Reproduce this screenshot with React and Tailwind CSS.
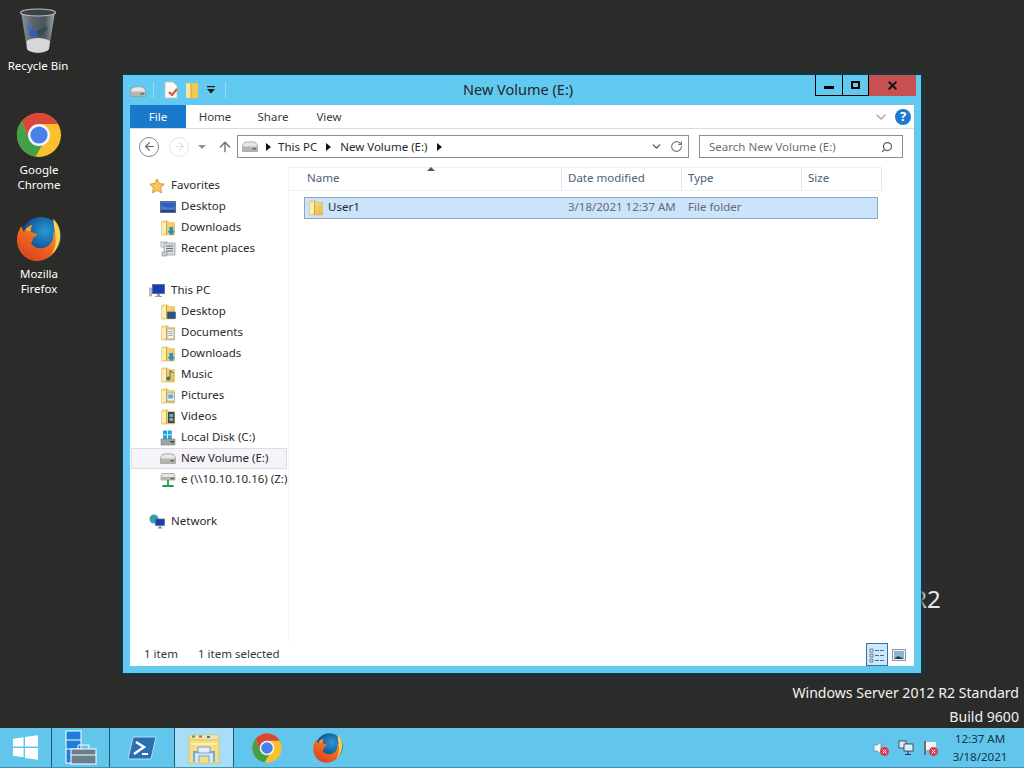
import { ChevronDown, RotateCw, Search, ArrowUp, ArrowLeft, ArrowRight, X } from 'lucide-react';

const font = 'font-["Noto_Sans","Open_Sans",sans-serif]';

function Folder({ className = 'w-4 h-4', id = 'fg', children }) {
  return (
    <svg viewBox="0 0 16 16" className={className}>
      <defs>
        <linearGradient id={id} x1="0" y1="0" x2="1" y2="1">
          <stop offset="0" stopColor="#fbe48c" />
          <stop offset="1" stopColor="#e9b83e" />
        </linearGradient>
      </defs>
      <path d="M2 1h6l1.200 1.500H14.500V15H2z" fill={`url(#${id})`} stroke="#d9b254" strokeWidth=".5" />
      <path d="M1.500 2.500L6.500 1v13l-5 1.200z" fill="#fbeeb4" stroke="#dcbb68" strokeWidth=".5" />
      <path d="M6.500 1v13" stroke="#c9962e" strokeWidth=".8" />
      {children}
    </svg>
  );
}

function Drive({ className = 'w-4 h-4', net, win }) {
  if (win) {
    return (
      <svg viewBox="0 0 16 16" className={className}>
        <path d="M3 .5h4v4H3zM7.800 .5h4v4h-4zM3 5.200h4v3.800H3zM7.800 5.200h4v3.800h-4z" fill="#1aa7dc" />
        <path d="M1 9h14v6H1z" fill="#9ea3a4" stroke="#6f7476" strokeWidth=".5" />
        <rect x="10.500" y="11" width="3.500" height="1.600" fill="#3f4a44" />
      </svg>
    );
  }
  return (
    <svg viewBox="0 0 16 16" className={className}>
      <path d={net ? 'M2 1.500h12l1 3v3.500H1V4.500z' : 'M2.500 3.500C5 2.500 11 2.500 13.500 3.500l2 3v6H.5v-6z'} fill="#e6e7e6" stroke="#80807e" strokeWidth=".6" />
      <rect x="1" y={net ? 5 : 7.500} width="14" height={net ? 3 : 4.500} fill="#b3b4b2" />
      <rect x="10.500" y={net ? 5.800 : 9} width="3.500" height="1.500" fill="#5e6a58" />
      {net && <path d="M8 8v5M2.500 14h11M8 12.500v2.500" stroke="#1fa04c" strokeWidth="1.800" />}
    </svg>
  );
}

function Star() {
  return (
    <svg viewBox="0 0 16 16" className="w-4 h-4">
      <path d="M8 .8l2.200 4.700 5 .7-3.600 3.500.9 5.200L8 12.400l-4.500 2.500.9-5.200L.8 6.200l5-.7z" fill="#f8c655" stroke="#dd8c2c" strokeWidth=".9" />
    </svg>
  );
}

function Monitor({ className = 'w-4 h-4' }) {
  return (
    <svg viewBox="0 0 16 16" className={className}>
      <rect x="0" y="5" width="2.500" height="8" fill="#c9ced3" stroke="#6e7780" strokeWidth=".5" />
      <rect x="3.500" y="1.500" width="12" height="9" fill="#1a3cb4" stroke="#5d6a78" strokeWidth=".8" />
      <path d="M8 11h3v2h2v1H6v-1h2z" fill="#9aa3ab" />
    </svg>
  );
}

function NetworkIcon() {
  return (
    <svg viewBox="0 0 16 16" className="w-4 h-4">
      <circle cx="5" cy="5" r="4.500" fill="#2f9fd0" />
      <path d="M2 3c2-1 3 0 4 1s-1 3-3 2z" fill="#3aa860" />
      <rect x="6.500" y="5" width="9" height="6.500" fill="#1a3cb4" stroke="#5d6a78" strokeWidth=".7" />
      <path d="M10 11.500h2v2h1.500v1h-5v-1H10z" fill="#8a939b" />
    </svg>
  );
}

function Recent() {
  return (
    <svg viewBox="0 0 16 16" className="w-4 h-4">
      <rect x="1" y="1" width="6" height="5" fill="#e8eef2" stroke="#8b959c" strokeWidth=".7" />
      <rect x="4" y="2" width="11" height="12" fill="#d5dbdf" stroke="#8b959c" strokeWidth=".7" />
      <path d="M6 5h7M6 7.500h7M6 10h7" stroke="#5f7482" strokeWidth="1" />
      <rect x="2" y="11" width="5" height="4" fill="#c4cacf" stroke="#8b959c" strokeWidth=".6" />
    </svg>
  );
}

function DeskPic() {
  return (
    <svg viewBox="0 0 16 16" className="w-4 h-4">
      <rect x=".5" y="2.500" width="15" height="11" fill="#4a73c4" stroke="#5b6f8d" strokeWidth="1" />
      <rect x="1" y="11" width="14" height="2" fill="#26437f" />
      <path d="M1 4h14v4C9 9 5 8 1 6z" fill="#2f5cc9" />
    </svg>
  );
}

const overlays = {
  desktop: <rect x="7.500" y="8" width="8" height="6.500" fill="#25568f" stroke="#44576a" strokeWidth=".6" />,
  documents: (
    <g>
      <rect x="7" y="4" width="7" height="10" fill="#f2f3f4" stroke="#8d979e" strokeWidth=".6" />
      <path d="M8.500 6.500h4M8.500 8.500h4M8.500 10.500h4" stroke="#7f95a6" strokeWidth=".8" />
    </g>
  ),
  downloads: <path d="M9.500 7h3.500v4h2l-3.700 4.500L7.600 11h1.900z" fill="#1e8fd8" />,
  music: <path d="M10.500 3v8.500a2 2 0 1 1-1-1.700V3c2 1 4 1.500 4.500 4-1-1-2-1.600-3.500-2z" fill="#2f74ad" />,
  pictures: (
    <g>
      <rect x="7" y="5" width="7.500" height="8" fill="#eef3f6" stroke="#8d979e" strokeWidth=".6" />
      <rect x="8.200" y="6.500" width="5" height="4" fill="#6aa9c9" />
    </g>
  ),
  videos: (
    <g>
      <rect x="8" y="3" width="6.500" height="11" fill="#3f4a4d" />
      <path d="M9.500 5h3.500v3H9.500zM9.500 9h3.500v3H9.500z" fill="#6fb0c9" />
    </g>
  ),
};

function NavRow({ icon, label, child, selected }) {
  return (
    <div className={`h-[21px] flex items-center mx-px ${child ? 'pl-[29px]' : 'pl-[18px]'} ${selected ? 'bg-[#f6f4f8] outline outline-1 -outline-offset-1 outline-[#dedce2]' : ''}`}>
      <span className="w-4 h-4 shrink-0">{icon}</span>
      <span className={`${child ? 'ml-[5px]' : 'ml-[6px]'} mb-[2px] text-[11.5px] text-[#2a2a2e] whitespace-nowrap`}>{label}</span>
    </div>
  );
}

function Caret({ className = '' }) {
  return <span className={`w-0 h-0 border-y-[4px] border-y-transparent border-l-[5px] border-l-[#111] ${className}`} />;
}

function ChromeLogo({ className }) {
  return (
    <svg viewBox="0 0 48 48" className={className}>
      <circle cx="24" cy="24" r="22" fill="#fbc02d" />
      <path d="M7 10 A22 22 0 0 0 20.500 45.700 L30 29 L14 28Z" fill="#43a047" />
      <path d="M7 10 A22 22 0 0 1 43.050 13 H24 L14 28Z" fill="#d9473b" />
      <circle cx="24" cy="24" r="11" fill="#f4f4f4" />
      <circle cx="24" cy="24" r="8.600" fill="#4a80ec" />
    </svg>
  );
}

function FirefoxLogo({ className, id }) {
  return (
    <svg viewBox="0 0 48 48" className={className}>
      <defs>
        <radialGradient id={`${id}b`} cx="0.6" cy="0.35" r="0.7">
          <stop offset="0" stopColor="#2b9ad6" />
          <stop offset="0.6" stopColor="#135b9e" />
          <stop offset="1" stopColor="#0d2f6b" />
        </radialGradient>
        <linearGradient id={`${id}o`} x1="0.8" y1="0" x2="0.2" y2="1">
          <stop offset="0" stopColor="#f7b733" />
          <stop offset="0.5" stopColor="#ef6b22" />
          <stop offset="1" stopColor="#d8401f" />
        </linearGradient>
      </defs>
      <circle cx="26" cy="22" r="20" fill={`url(#${id}b)`} />
      <path d="M38 4c8 6 9 18 5 27-4 10-13 15-21 15C11 46 2 37 2 25 2 19 4 14 7 11c0 3 1 5 2 6 2-4 6-7 9-7-2 2-3 5-2 7 2 1 4 1 6 2 1 2-3 3-4 4 0 3-1 4-2 5 2 4 7 6 12 5 7-1 12-8 10-16 2 1 3 3 4 5 0-7-1-13-4-18z" fill={`url(#${id}o)`} />
      <path d="M10 15c2-3 5-4 7-5-1 2-2 4-1 6-2 0-4 0-6-1z" fill="#f4a533" />
      <path d="M38 4c5 5 7 11 7 17 0 8-4 15-9 19 4-6 6-13 4-22-1-5-1-10-2-14z" fill="#f9d44a" />
    </svg>
  );
}

function RecycleBin() {
  return (
    <svg viewBox="0 0 38 46" className="w-[38px] h-[46px]">
      <defs>
        <linearGradient id="binBody" x1="0" y1="0" x2="1" y2="0">
          <stop offset="0" stopColor="#8d9498" />
          <stop offset="0.35" stopColor="#59636c" />
          <stop offset="0.7" stopColor="#4a545c" />
          <stop offset="1" stopColor="#a5aaac" />
        </linearGradient>
      </defs>
      <path d="M2 4 L8 41 C12 46 26 46 30 41 L36 4Z" fill="url(#binBody)" />
      <ellipse cx="19" cy="4.500" rx="17.500" ry="3.500" fill="#3a4045" stroke="#b9bec0" strokeWidth="1.200" />
      <path d="M7.500 33 C13 29 25 29 31 33 L30 41 C26 46 12 46 8 41Z" fill="#d6d8d8" />
      <circle cx="14" cy="25" r="3.500" fill="#2a5fc0" />
      <circle cx="10" cy="20" r="2.500" fill="#3b6fc4" opacity=".8" />
      <path d="M17 24l9-6 3 2-8 9z" fill="#3a4a5a" />
    </svg>
  );
}

function DesktopIcon({ pos, icon, lines }) {
  return (
    <div className={`absolute ${pos} w-[76px] flex flex-col items-center text-white text-[11.5px] leading-[15px]`}>
      {icon}
      {lines.map((l) => (
        <span key={l} className="whitespace-nowrap">{l}</span>
      ))}
    </div>
  );
}

function XBadge() {
  return (
    <g>
      <circle cx="11.500" cy="11.500" r="4.500" fill="#d9404f" />
      <path d="M9.800 9.800l3.400 3.400M13.200 9.800l-3.400 3.400" stroke="#fff" strokeWidth="1" />
    </g>
  );
}

function TaskItem({ width, active, children }) {
  return (
    <div className={`${width} h-full flex items-center justify-center border-r border-[#1d5a78] ${active ? 'bg-[#a5def6]' : ''}`}>
      {children}
    </div>
  );
}

export default function App() {
  return (
    <div className={`relative w-[1024px] h-[768px] overflow-hidden bg-[#2b2c2a] flex flex-col justify-end ${font}`}>
      <DesktopIcon pos="left-0 top-[8px]" lines={['Recycle Bin']} icon={<div className="h-[50px]"><RecycleBin /></div>} />
      <DesktopIcon pos="left-[1px] top-[111px]" lines={['Google', 'Chrome']} icon={<ChromeLogo className="w-[48px] h-[48px] mb-[3px]" />} />
      <DesktopIcon pos="left-[1px] top-[215px]" lines={['Mozilla', 'Firefox']} icon={<FirefoxLogo id="ffd" className="w-[48px] h-[48px] mb-[3px]" />} />

      <div className="absolute left-[912px] top-[582px] text-[24px] leading-[34px] text-[#e8e8e8]">R2</div>

      {/* explorer window */}
      <div className="absolute left-[123px] top-[75px] w-[798px] h-[598px] bg-[#62c9f0] shadow-[0_0_4px_2px_#123a4a] flex flex-col px-[7px] pb-[7px]">
        <div className="relative h-[30px] shrink-0 flex items-center">
          <Drive className="w-4 h-4 mt-[4px]" />
          <span className="w-px h-[16px] bg-[#9adcf5] ml-[7px]" />
          <svg viewBox="0 0 16 18" className="w-[16px] h-[18px] ml-[9px]">
            <path d="M2 1h8l4 4v12H2z" fill="#fafafa" stroke="#c9b9b0" strokeWidth=".7" />
            <path d="M6 11l3 3 5-6" stroke="#d8552c" strokeWidth="2" fill="none" />
          </svg>
          <svg viewBox="0 0 14 18" className="w-[14px] h-[18px] ml-[6px]">
            <path d="M1 2h12v15H1z" fill="#f2c94f" />
            <path d="M1 2l5 1.500V17H1z" fill="#fbe59a" />
            <path d="M6 3v14" stroke="#c89a2e" strokeWidth=".8" />
          </svg>
          <svg viewBox="0 0 8 8" className="w-2 h-2 ml-[8px]">
            <path d="M0 0h8v1.200H0zM0 3h8L4 7.500z" fill="#1a1a1a" />
          </svg>
          <span className="w-px h-[16px] bg-[#9adcf5] ml-[10px]" />
          <span className="absolute left-[333px] top-[4px] text-[14.5px] leading-[20px] text-[#23282c] whitespace-nowrap">New Volume (E:)</span>
          <div className="absolute right-[-2px] top-0 flex h-[21px]">
            <div className="w-[28px] border border-black border-t-0 flex items-center justify-center">
              <span className="w-[10px] h-[3px] bg-black mt-[4px]" />
            </div>
            <div className="w-[26px] border-r border-b border-black flex items-center justify-center">
              <span className="w-[9px] h-[8px] border-2 border-black" />
            </div>
            <div className="w-[47px] bg-[#c75050] flex items-center justify-center">
              <X size={13} strokeWidth={3.500} color="#111" />
            </div>
          </div>
        </div>

        <div className="flex-1 min-h-0 bg-white flex flex-col">
          <div className="h-[24px] shrink-0 flex items-stretch border-b border-[#dadbdc] text-[11.5px] text-[#3c3c3c]">
            <div className="w-[56px] bg-[#1979ca] text-white flex items-center justify-center">File</div>
            <div className="w-[58px] flex items-center justify-center">Home</div>
            <div className="w-[58px] flex items-center justify-center">Share</div>
            <div className="w-[54px] flex items-center justify-center">View</div>
            <div className="flex-1 flex items-center justify-end pr-[3px]">
              <ChevronDown size={16} color="#a0a4a8" strokeWidth={2} />
              <span className="w-[16px] h-[16px] ml-[6px] rounded-full bg-[#1c7ad1] text-white text-[13px] font-bold flex items-center justify-center">?</span>
            </div>
          </div>

          <div className="h-[35px] shrink-0 flex items-center pl-[9px] pr-[11px]">
            <span className="w-[20px] h-[20px] rounded-full border border-[#7d8790] flex items-center justify-center">
              <ArrowLeft size={13} color="#5a646c" strokeWidth={2} />
            </span>
            <span className="w-[20px] h-[20px] ml-[10px] rounded-full border border-[#e2e4e6] flex items-center justify-center">
              <ArrowRight size={13} color="#dfe1e3" strokeWidth={2} />
            </span>
            <span className="w-0 h-0 ml-[9px] border-x-[4px] border-x-transparent border-t-[4px] border-t-[#8a8f94]" />
            <ArrowUp size={16} color="#6a7076" strokeWidth={2} className="ml-[11px]" />
            <div className="ml-[4px] w-[452px] h-[23px] border border-[#8c9094] flex items-center pl-[4px] pr-[4px] text-[11.5px] text-[#26282c]">
              <Drive className="w-4 h-4" />
              <Caret className="ml-[8px]" />
              <span className="ml-[7px]">This PC</span>
              <Caret className="ml-[9px]" />
              <span className="ml-[9px]">New Volume (E:)</span>
              <Caret className="ml-[9px]" />
              <ChevronDown size={13} color="#555" strokeWidth={2.500} className="ml-auto mr-[7px]" />
              <RotateCw size={13} color="#70757a" strokeWidth={2} className="mr-[1px]" />
            </div>
            <div className="ml-[10px] flex-1 h-[23px] border border-[#8c9094] flex items-center justify-between pl-[9px] pr-[9px] text-[11.5px] text-[#6d6f72]">
              <span>Search New Volume (E:)</span>
              <Search size={12} color="#5d6267" strokeWidth={2.500} className="-scale-x-100" />
            </div>
          </div>

          <div className="flex-1 min-h-0 flex">
            <div className="w-[159px] shrink-0 pt-[11px] border-r border-[#f3f6f9]">
              <NavRow icon={<Star />} label="Favorites" />
              <NavRow child icon={<DeskPic />} label="Desktop" />
              <NavRow child icon={<Folder id="f1">{overlays.downloads}</Folder>} label="Downloads" />
              <NavRow child icon={<Recent />} label="Recent places" />
              <div className="h-[21px]" />
              <NavRow icon={<Monitor />} label="This PC" />
              <NavRow child icon={<Folder id="f2">{overlays.desktop}</Folder>} label="Desktop" />
              <NavRow child icon={<Folder id="f3">{overlays.documents}</Folder>} label="Documents" />
              <NavRow child icon={<Folder id="f4">{overlays.downloads}</Folder>} label="Downloads" />
              <NavRow child icon={<Folder id="f5">{overlays.music}</Folder>} label="Music" />
              <NavRow child icon={<Folder id="f6">{overlays.pictures}</Folder>} label="Pictures" />
              <NavRow child icon={<Folder id="f7">{overlays.videos}</Folder>} label="Videos" />
              <NavRow child icon={<Drive win />} label="Local Disk (C:)" />
              <NavRow child selected icon={<Drive />} label="New Volume (E:)" />
              <NavRow child icon={<Drive net />} label="e (\\10.10.10.16) (Z:)" />
              <div className="h-[21px]" />
              <NavRow icon={<NetworkIcon />} label="Network" />
            </div>

            <div className="flex-1 min-w-0 relative pt-[3px]">
              <div className="w-[593px] h-[24px] flex border-y border-[#eef0f2] text-[11.5px] text-[#4c607a]">
                <div className="w-[273px] pl-[18px] pb-[2px] border-r border-[#e5e8eb] flex items-center">Name</div>
                <div className="w-[120px] pl-[6px] pb-[2px] border-r border-[#e5e8eb] flex items-center">Date modified</div>
                <div className="w-[120px] pl-[6px] pb-[2px] border-r border-[#e5e8eb] flex items-center">Type</div>
                <div className="w-[80px] pl-[6px] pb-[2px] border-r border-[#e5e8eb] flex items-center">Size</div>
              </div>
              <span className="absolute left-[138px] top-[3px] w-0 h-0 border-x-[4px] border-x-transparent border-b-[4px] border-b-[#555]" />
              <div className="ml-[15px] mt-[6px] w-[574px] h-[22px] bg-[#cce4fb] border border-[#8fa6bd] flex items-center text-[11.5px]">
                <div className="w-[263px] pl-[3px] flex items-center">
                  <Folder id="f8" />
                  <span className="ml-[4px] mb-[2px] text-[#26282c]">User1</span>
                </div>
                <span className="w-[120px] mb-[2px] text-[#66696d] whitespace-nowrap">3/18/2021 12:37 AM</span>
                <span className="mb-[2px] text-[#66696d]">File folder</span>
              </div>
            </div>
          </div>

          <div className="h-[23px] shrink-0 flex items-center pl-[14px] text-[11.5px] text-[#33353a]">
            <span className="w-[54px] mb-[2px]">1 item</span>
            <span className="mb-[2px]">1 item selected</span>
            <div className="ml-auto flex items-center pr-[8px]">
              <div className="w-[22px] h-[23px] bg-[#cce8ff] border border-[#3f6f9f] flex items-center justify-center">
                <svg viewBox="0 0 16 16" className="w-4 h-4">
                  <path d="M1 2h3v3H1zM1 7h3v3H1zM1 12h3v3H1z" fill="none" stroke="#5a6a78" strokeWidth=".8" />
                  <path d="M6 3.500h4M11 3.500h4M6 8.500h4M11 8.500h4M6 13.500h4M11 13.500h4" stroke="#5a6a78" strokeWidth="1" />
                </svg>
              </div>
              <svg viewBox="0 0 14 12" className="w-[14px] h-[12px] ml-[4px]">
                <rect x=".5" y=".5" width="13" height="11" fill="#eef2f5" stroke="#8d98a2" />
                <rect x="2" y="2" width="10" height="8" fill="#8db4cf" />
                <path d="M2 10l4-3 6 3z" fill="#1f3d57" />
              </svg>
            </div>
          </div>
        </div>
      </div>

      <div className="absolute right-[5px] top-[681px] flex flex-col items-end text-[14.1px] leading-[24px] text-[#f2f2f2]">
        <span className="whitespace-nowrap">Windows Server 2012 R2 Standard</span>
        <span>Build 9600</span>
      </div>

      {/* taskbar */}
      <div className="h-[40px] shrink-0 bg-[#62c5ec] border-b border-[#3e8fb2] flex items-stretch relative">
        <TaskItem width="w-[52px]">
          <svg viewBox="0 0 28 28" className="w-[27px] h-[27px]">
            <path d="M1 5l11-1.600V13H1zM13.500 3.200L27 1.200V13H13.500zM1 14.500h11v9.600L1 22.500zM13.500 14.500H27v12.300l-13.500-2z" fill="#fff" />
          </svg>
        </TaskItem>
        <TaskItem width="w-[58px]">
          <svg viewBox="0 0 34 36" className="w-[34px] h-[36px]">
            <rect x="2" y="1" width="15" height="32" fill="#1e7fd8" stroke="#fff" />
            <path d="M2 10h15M2 19h15" stroke="#fff" />
            <rect x="7" y="19" width="25" height="15" fill="#6b7e90" stroke="#fff" />
            <path d="M14 19v-4h11v4" fill="none" stroke="#fff" />
            <path d="M7 25h25" stroke="#fff" />
          </svg>
        </TaskItem>
        <TaskItem width="w-[65px]">
          <svg viewBox="0 0 30 24" className="w-[30px] h-[24px]">
            <path d="M6 1h23l-5 22H1z" fill="#2b6fb3" stroke="#b9dcf3" />
            <path d="M9 6l8 5-10 7" fill="none" stroke="#fff" strokeWidth="2.500" />
            <path d="M15 18h6" stroke="#fff" strokeWidth="2" />
          </svg>
        </TaskItem>
        <TaskItem width="w-[59px]" active>
          <svg viewBox="0 0 32 32" className="w-[32px] h-[32px]">
            <rect x="1" y="3" width="30" height="5" fill="#f3e3a8" stroke="#c9b878" strokeWidth=".5" />
            <rect x="4" y="3.500" width="3" height="2" fill="#3aa84e" />
            <rect x="11" y="3.500" width="3" height="2" fill="#d0533c" />
            <rect x="19" y="4" width="3" height="2" fill="#2f7fd0" />
            <rect x="1" y="8" width="30" height="23" fill="#f7de86" stroke="#d9bc5c" strokeWidth=".7" />
            <path d="M3 12h26" stroke="#fbeeb0" strokeWidth="2" />
            <path d="M6 30V20h20v10" fill="#d7e8f2" stroke="#6ea4d8" strokeWidth="1.800" />
            <rect x="10" y="15" width="12" height="6" fill="#e9eff0" stroke="#6ea4d8" />
            <path d="M11 30v-6h10v6" fill="#f7de86" stroke="#6ea4d8" />
          </svg>
        </TaskItem>
        <div className="w-[66px] flex items-center justify-center">
          <ChromeLogo className="w-[32px] h-[32px]" />
        </div>
        <div className="flex items-center ml-[12px]">
          <FirefoxLogo id="fft" className="w-[32px] h-[32px]" />
        </div>
        <div className="ml-auto flex items-center">
          <svg viewBox="0 0 16 16" className="w-4 h-4">
            <path d="M1 5h3l4-3v12l-4-3H1z" fill="#eef3f6" stroke="#6e7a82" strokeWidth=".6" />
            <XBadge />
          </svg>
          <svg viewBox="0 0 16 16" className="w-4 h-4 ml-[9px]">
            <rect x="1" y="1" width="7" height="7" fill="#d8eef8" stroke="#333" strokeWidth=".8" />
            <rect x="6" y="4" width="9" height="7" fill="#d8eef8" stroke="#333" strokeWidth=".8" />
            <path d="M10 11v3M7 14.500h6" stroke="#333" strokeWidth="1" />
          </svg>
          <svg viewBox="0 0 16 16" className="w-4 h-4 ml-[8px]">
            <path d="M3 1v14" stroke="#7a4a3a" strokeWidth="1.400" />
            <path d="M4 2h10v8H4z" fill="#f2f4f5" />
            <XBadge />
          </svg>
          <div className="w-[88px] ml-[-2px] flex flex-col items-center text-[11.5px] leading-[18px] text-[#123447]">
            <span>12:37 AM</span>
            <span>3/18/2021</span>
          </div>
        </div>
      </div>
    </div>
  );
}
